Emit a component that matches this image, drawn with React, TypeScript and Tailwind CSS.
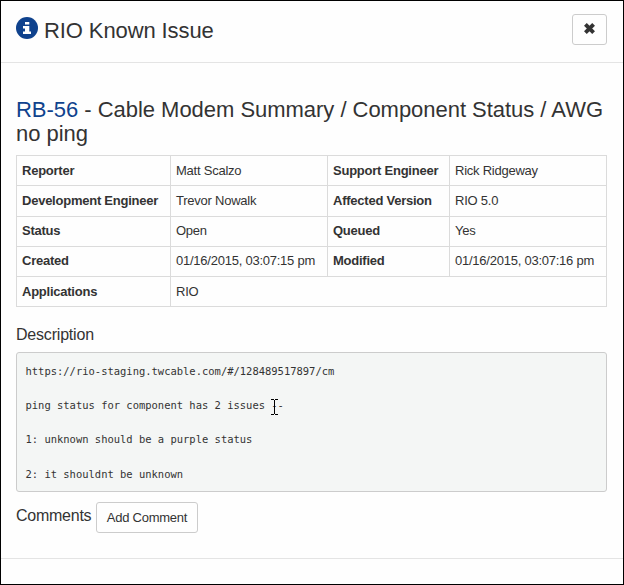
import type { ReactNode } from "react";

const rows = [
  ["Reporter", "Matt Scalzo", "Support Engineer", "Rick Ridgeway"],
  ["Development Engineer", "Trevor Nowalk", "Affected Version", "RIO 5.0"],
  ["Status", "Open", "Queued", "Yes"],
  ["Created", "01/16/2015, 03:07:15 pm", "Modified", "01/16/2015, 03:07:16 pm"],
];

function Label({ children }: { children: ReactNode }) {
  return (
    <th className="border border-[#dbdbdb] px-[5px] pt-[6px] text-left align-top font-bold tracking-[-0.24px] whitespace-nowrap">
      {children}
    </th>
  );
}

function Value({ children, span }: { children: ReactNode; span?: number }) {
  return (
    <td
      colSpan={span}
      className="border border-[#dbdbdb] px-[5px] pt-[6px] align-top tracking-[-0.24px] whitespace-nowrap"
    >
      {children}
    </td>
  );
}

function InfoIcon() {
  return (
    <svg className="mt-[16px] h-[22px] w-[22px] shrink-0" viewBox="0 0 22 22">
      <circle cx="11" cy="11" r="11" fill="#0f428d" />
      <path d="M9 5h4.3v2.6H9zM7 9h6.3v5.4H15V17H7v-2.6h2v-2.8H7z" fill="#fff" />
    </svg>
  );
}

export default function App() {
  return (
    <div className="flex h-[585px] w-[624px] flex-col border border-black bg-[#fefefe] font-['Liberation_Sans',Arial,sans-serif] text-[#333]">
      <header className="flex h-[62px] items-start border-b border-[#e4e4e4] pl-[15px] pr-4">
        <InfoIcon />
        <h1 className="ml-[6px] mt-[18px] text-[22px] leading-6 tracking-[-0.1px]">RIO Known Issue</h1>
        <button className="ml-auto mt-[13px] flex h-[31px] w-[35px] items-center justify-center rounded-[3px] border border-[#ccc]">
          <svg className="-mt-[3px] h-[13px] w-[13px]" viewBox="0 0 13 13">
            <path d="M2.4 2.4l8.2 8.2M10.6 2.4l-8.2 8.2" stroke="#333" strokeWidth="3.9" />
          </svg>
        </button>
      </header>

      <main className="flex h-[496px] flex-col border-b border-[#e4e4e4] pl-[15px] pr-4">
        <h2 className="mt-[35px] text-[22px] leading-6 tracking-[-0.03px] whitespace-nowrap">
          <span className="text-[#0f428d]">RB-56</span> - Cable Modem Summary / Component Status / AWG
          <br />
          no ping
        </h2>

        <table className="mt-[9px] h-[152px] w-[591px] table-fixed border-collapse text-[13px] leading-[18px]">
          <colgroup>
            <col className="w-[154px]" />
            <col className="w-[157px]" />
            <col className="w-[122px]" />
            <col className="w-[157px]" />
          </colgroup>
          <tbody>
            {rows.map(([a, b, c, d], i) => (
              <tr key={a} className={i === 1 ? "h-[31px]" : i > 1 ? "h-[30px] leading-[16px]" : "h-[30px]"}>
                <Label>{a}</Label>
                <Value>{b}</Value>
                <Label>{c}</Label>
                <Value>{d}</Value>
              </tr>
            ))}
            <tr className="h-[30px]">
              <Label>Applications</Label>
              <Value span={3}>RIO</Value>
            </tr>
          </tbody>
        </table>

        <h3 className="mt-[18px] text-[16px] leading-[19px] tracking-[-0.2px]">Description</h3>
        <div className="relative mt-[8px] h-[140px] rounded-[3px] border border-[#ccc] bg-[#f4f6f5] pl-[8.5px] pt-[10px]">
          <pre className="font-['DejaVu_Sans_Mono',monospace] text-[10.47px] leading-[17.1px]">
            {"https://rio-staging.twcable.com/#/128489517897/cm\n\nping status for component has 2 issues --\n\n1: unknown should be a purple status\n\n2: it shouldnt be unknown"}
          </pre>
          <svg className="absolute left-[254px] top-[46px] h-[16px] w-[7px]" viewBox="0 0 7 16" shapeRendering="crispEdges">
            <path d="M0 .5h3M4 .5h3M3.5 1v14M0 15.5h3M4 15.5h3" stroke="#000" fill="none" />
          </svg>
        </div>

        <div className="mt-[10px] flex items-start">
          <h3 className="mt-[5px] w-[80px] text-[16px] leading-[18px] tracking-[-0.25px]">Comments</h3>
          <button className="h-[31px] w-[102px] rounded-[3px] border border-[#ccc] text-[13px] tracking-[-0.24px] whitespace-nowrap">
            Add Comment
          </button>
        </div>
      </main>
    </div>
  );
}
